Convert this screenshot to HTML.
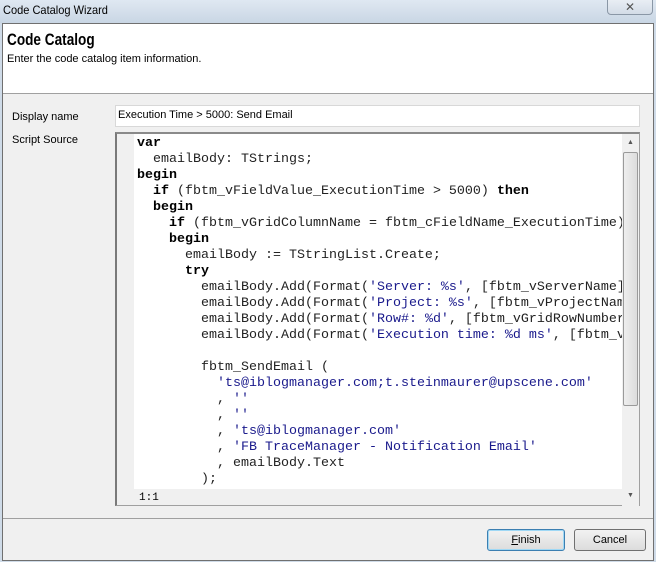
<!DOCTYPE html>
<html><head><style>
*{margin:0;padding:0;box-sizing:border-box}
body{width:656px;height:562px;overflow:hidden;background:#cfdbe8;font-family:"Liberation Sans",sans-serif;font-size:12px;position:relative}
.title{position:absolute;left:0;top:0;width:656px;height:23px;background:linear-gradient(#dfe8f2,#c9d6e4);}
.title span{position:absolute;left:3px;top:3px;font-size:12px;color:#000;transform:scaleX(0.92);transform-origin:left}
.close{position:absolute;left:607px;top:-1px;width:46px;height:16px;border:1px solid #8a97a6;border-radius:0 0 4px 4px;background:linear-gradient(#e9eef4,#d3dce7);text-align:center;font-size:12px;line-height:14px;color:#555}
.win{position:absolute;left:2px;top:23px;width:652px;height:538px;background:#f0f0f0;border:1px solid #707070}
.head{position:absolute;left:0;top:0;width:650px;height:70px;background:#fff;border-bottom:1px solid #a0a0a0}
.head h1{position:absolute;left:4px;top:6px;font-size:17px;font-weight:bold;transform:scaleX(0.8);transform-origin:left}
.head p{position:absolute;left:4px;top:29px;font-size:11px}
.lbl{position:absolute;left:9px;font-size:11px}
.inp{position:absolute;left:112px;top:81px;width:525px;height:22px;background:#fff;border:1px solid #d8d8d8;padding:3px 2px;font-size:11px}
.ed{position:absolute;left:112px;top:108px;width:525px;height:374px;background:#f0f0f0;border:1px solid #a0a0a0;border-left:2px solid #7a7a7a;border-top:2px solid #8a8a8a}
.code{position:absolute;left:17px;top:0;width:488px;height:355px;background:#fff;overflow:hidden;font-family:"Liberation Mono",monospace;font-size:13.33px;line-height:16px;white-space:pre;padding:2px 0 0 3px;color:#222}
.code b{font-weight:bold;color:#000}.s{color:#1a1a8c}
.sb{position:absolute;left:505px;top:0;width:17px;height:372px;background:#f0f0f0}
.thumb{position:absolute;left:1px;top:18px;width:15px;height:254px;border:1px solid #9a9a9a;border-radius:2px;background:linear-gradient(90deg,#eee,#dcdcdc)}
.st{position:absolute;left:22px;top:358px;font-family:"Liberation Mono",monospace;font-size:11px}
.sep{position:absolute;left:0;top:494px;width:650px;height:1px;background:#a0a0a0}
.btn{position:absolute;top:505px;height:22px;border:1px solid #707070;border-radius:3px;background:linear-gradient(#f2f2f2,#dcdcdc);text-align:center;line-height:20px;font-size:11px}
</style></head><body>
<div class="title"><span>Code Catalog Wizard</span><div class="close">✕</div></div>
<div class="win">
<div class="head"><h1>Code Catalog</h1><p>Enter the code catalog item information.</p></div>
<div class="lbl" style="top:87px">Display name</div>
<div class="lbl" style="top:110px">Script Source</div>
<div class="inp">Execution Time &gt; 5000: Send Email</div>
<div class="ed">
<div class="code"><b>var</b>
  emailBody: TStrings;
<b>begin</b>
  <b>if</b> (fbtm_vFieldValue_ExecutionTime &gt; 5000) <b>then</b>
  <b>begin</b>
    <b>if</b> (fbtm_vGridColumnName = fbtm_cFieldName_ExecutionTime) <b>then</b>
    <b>begin</b>
      emailBody := TStringList.Create;
      <b>try</b>
        emailBody.Add(Format(<span class="s">'Server: %s'</span>, [fbtm_vServerName]));
        emailBody.Add(Format(<span class="s">'Project: %s'</span>, [fbtm_vProjectName]));
        emailBody.Add(Format(<span class="s">'Row#: %d'</span>, [fbtm_vGridRowNumber]));
        emailBody.Add(Format(<span class="s">'Execution time: %d ms'</span>, [fbtm_vFieldValue]));

        fbtm_SendEmail (
          <span class="s">'ts@iblogmanager.com;t.steinmaurer@upscene.com'</span>
          , <span class="s">''</span>
          , <span class="s">''</span>
          , <span class="s">'ts@iblogmanager.com'</span>
          , <span class="s">'FB TraceManager - Notification Email'</span>
          , emailBody.Text
        );</div>
<div class="sb"><div style="position:absolute;left:5px;top:5px;font-size:7px;color:#555">▲</div><div class="thumb"></div><div style="position:absolute;left:5px;top:358px;font-size:7px;color:#555">▼</div></div>
<div class="st">1:1</div>
</div>
<div class="sep"></div>
<div class="btn" style="left:484px;width:78px;border-color:#3c7fb1;box-shadow:inset 0 0 0 1px #9fd8f5"><u>F</u>inish</div>
<div class="btn" style="left:571px;width:72px">Cancel</div>
</div>
</body></html>
